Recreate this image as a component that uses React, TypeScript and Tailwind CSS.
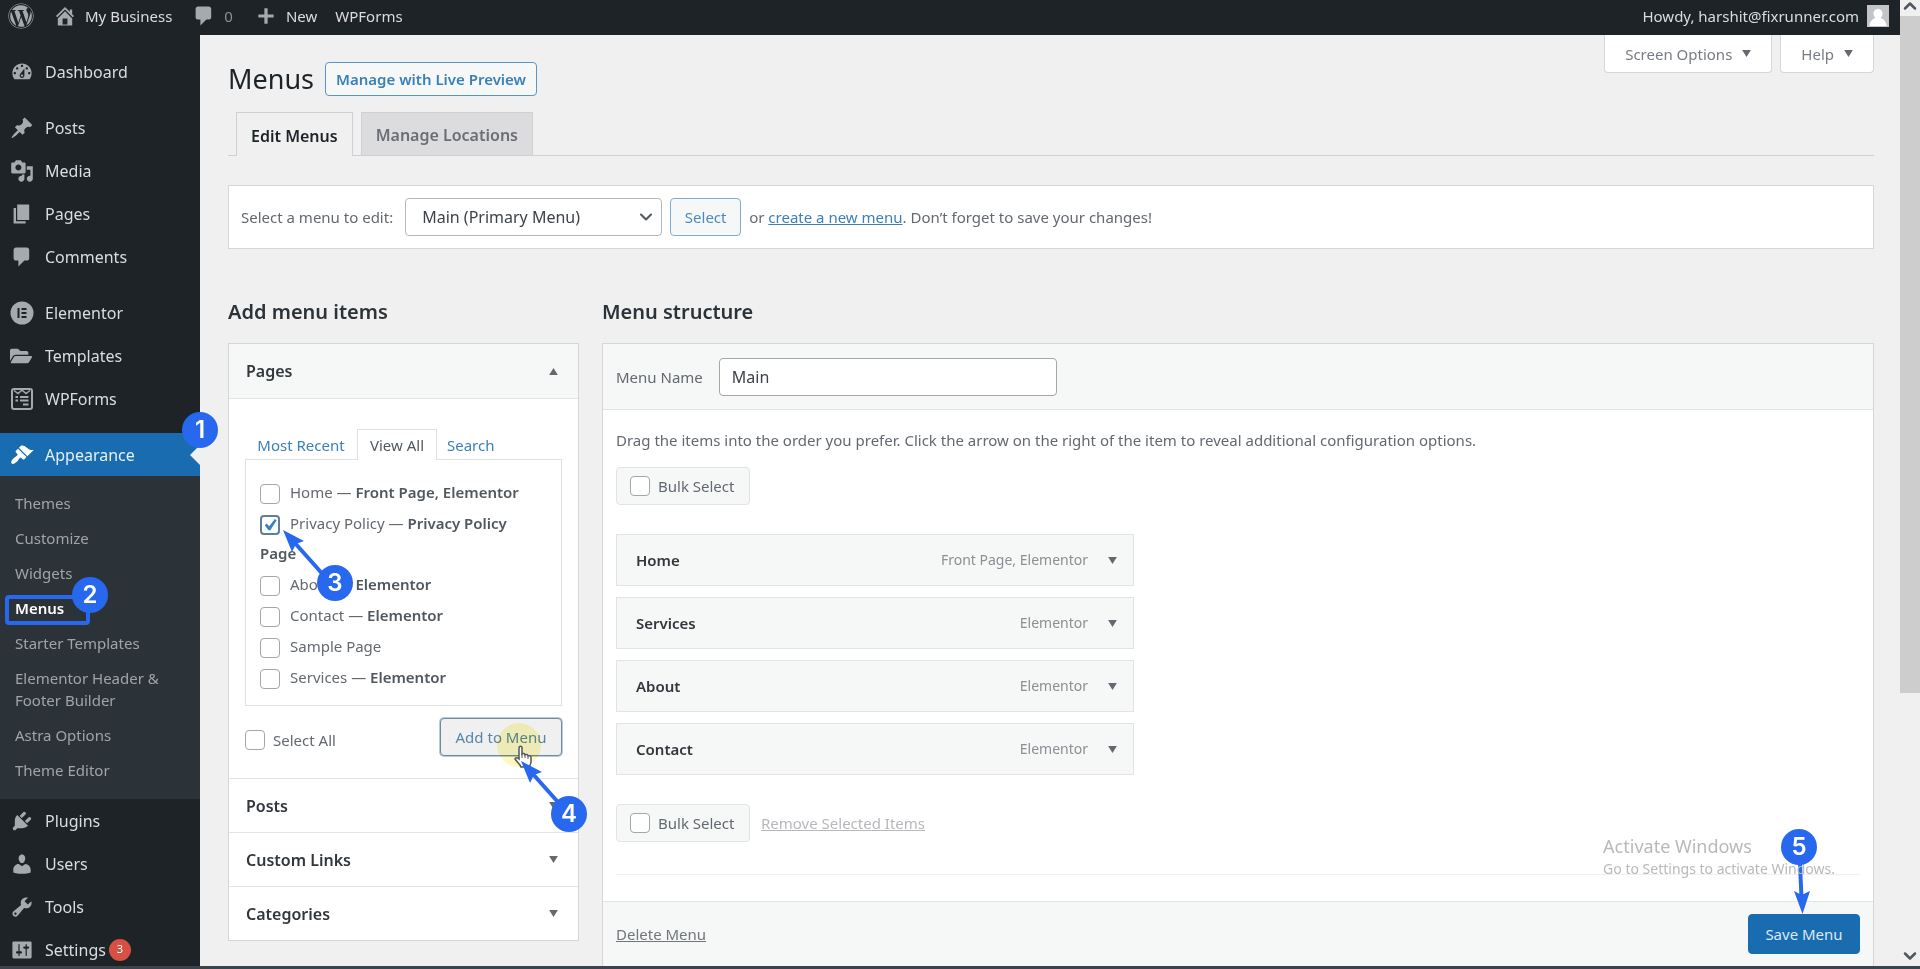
import type { ReactNode } from "react";
import clsx from "clsx";
import { ChevronDown, ChevronUp } from "lucide-react";
import { FaFolderOpen, FaWordpress } from "react-icons/fa";

const iconPaths = {
  dashboard:
    "M3.76 16h12.48c1.1-1.37 1.76-3.11 1.76-5 0-4.42-3.58-8-8-8s-8 3.58-8 8c0 1.89.66 3.63 1.76 5zM10 4c.55 0 1 .45 1 1s-.45 1-1 1-1-.45-1-1 .45-1 1-1zM6 6c.55 0 1 .45 1 1s-.45 1-1 1-1-.45-1-1 .45-1 1-1zm8 0c.55 0 1 .45 1 1s-.45 1-1 1-1-.45-1-1 .45-1 1-1zm-5.37 5.55L12 7v6c0 1.1-.9 2-2 2s-2-.9-2-2c0-.57.24-1.08.63-1.45zM4 10c.55 0 1 .45 1 1s-.45 1-1 1-1-.45-1-1 .45-1 1-1zm12 0c.55 0 1 .45 1 1s-.45 1-1 1-1-.45-1-1 .45-1 1-1zm-5 3c0-.55-.45-1-1-1s-1 .45-1 1 .45 1 1 1 1-.45 1-1z",
  post: "M10.44 3.02l1.82-1.82 6.36 6.35-1.83 1.82c-1.05-.68-2.48-.57-3.41.36l-.75.75c-.92.93-1.04 2.35-.35 3.41l-1.83 1.82-2.41-2.41-2.8 2.79c-.42.42-3.38 2.71-3.8 2.29s1.86-3.39 2.28-3.81l2.79-2.79L4.1 9.36l1.83-1.82c1.05.69 2.48.57 3.4-.36l.75-.75c.93-.92 1.05-2.35.36-3.41z",
  media:
    "M13 11V4c0-.55-.45-1-1-1h-1.67L9 1H5L3.67 3H2c-.55 0-1 .45-1 1v7c0 .55.45 1 1 1h10c.55 0 1-.45 1-1zM7 4.5c1.38 0 2.5 1.12 2.5 2.5S8.38 9.5 7 9.5 4.5 8.38 4.5 7 5.62 4.5 7 4.5zM14 6h5v10.5c0 1.38-1.12 2.5-2.5 2.5S14 17.88 14 16.5s1.12-2.5 2.5-2.5c.17 0 .34.02.5.05V9h-3V6zm-4 8.05V13h2v3.5c0 1.38-1.12 2.5-2.5 2.5S7 17.88 7 16.5 8.12 14 9.5 14c.17 0 .34.02.5.05z",
  page: "M6 15V2h10v13H6zm-1 1h8v2H3V5h2v11z",
  comments: "M5 2h9c1.1 0 2 .9 2 2v7c0 1.1-.9 2-2 2h-2l-5 5v-5H5c-1.1 0-2-.9-2-2V4c0-1.1.9-2 2-2z",
  appearance:
    "M14.48 11.06L7.41 3.99l1.5-1.5c.5-.56 2.3-.47 3.51.32 1.21.8 1.43 1.28 2.91 2.1 1.18.64 2.45 1.26 4.45.85zm-.71.71L6.7 4.7 4.93 6.47c-.39.39-.39 1.02 0 1.41l1.06 1.06c.39.39.39 1.03 0 1.42-.6.6-1.43 1.11-2.21 1.69-.35.26-.7.53-1.01.84C1.43 14.23.4 16.08 1.4 17.07c.99 1 2.84-.03 4.18-1.36.31-.31.58-.66.85-1.02.57-.78 1.08-1.61 1.69-2.21.39-.39 1.02-.39 1.41 0l1.06 1.06c.39.39 1.02.39 1.41 0z",
  plugins:
    "M13.11 4.36L9.87 7.6 8 5.73l3.24-3.24c.35-.34 1.05-.2 1.56.32.52.51.66 1.21.31 1.55zm-8 1.77l.91-1.12 9.01 9.01-1.19.84c-.71.71-2.63 1.16-3.82 1.16H6.14L4.9 17.26c-.59.59-1.54.59-2.12 0-.59-.58-.59-1.53 0-2.12l1.24-1.24v-3.88c0-1.13.4-3.19 1.09-3.89zm7.26 3.97l3.24-3.24c.34-.35 1.04-.21 1.55.31.52.51.66 1.21.31 1.55l-3.24 3.25z",
  users:
    "M10 9.25c-2.27 0-2.73-3.44-2.73-3.44C7 4.02 7.82 2 9.97 2c2.16 0 2.98 2.02 2.71 3.81 0 0-.41 3.44-2.68 3.44zm0 2.57L12.72 10c2.39 0 4.52 2.33 4.52 4.53v2.49s-3.65 1.13-7.24 1.13c-3.65 0-7.24-1.13-7.24-1.13v-2.49c0-2.25 1.94-4.48 4.47-4.48z",
  tools:
    "M16.68 9.77c-1.34 1.34-3.3 1.67-4.95.99l-5.41 6.52c-.99.99-2.59.99-3.58 0s-.99-2.59 0-3.57l6.52-5.42c-.68-1.65-.35-3.61.99-4.95 1.28-1.28 3.12-1.62 4.72-1.06l-2.89 2.89 2.82 2.82 2.86-2.87c.53 1.58.18 3.39-1.08 4.65zM3.81 16.21c.4.39 1.04.39 1.43 0 .4-.4.4-1.04 0-1.43-.39-.4-1.03-.4-1.43 0-.39.39-.39 1.03 0 1.43z",
  settings:
    "M18 16V4c0-.55-.45-1-1-1H3c-.55 0-1 .45-1 1v12c0 .55.45 1 1 1h14c.55 0 1-.45 1-1zM8 11h1c.55 0 1 .45 1 1s-.45 1-1 1H8v1.5c0 .28-.22.5-.5.5s-.5-.22-.5-.5V13H6c-.55 0-1-.45-1-1s.45-1 1-1h1V5.5c0-.28.22-.5.5-.5s.5.22.5.5V11zm5-2h-1c-.55 0-1-.45-1-1s.45-1 1-1h1V5.5c0-.28.22-.5.5-.5s.5.22.5.5V7h1c.55 0 1 .45 1 1s-.45 1-1 1h-1v5.5c0 .28-.22.5-.5.5s-.5-.22-.5-.5V9z",
  home: "M16 8.5l1.53 1.53-1.06 1.06L10 4.6l-6.47 6.49-1.06-1.06L10 2.5l4 4v-2h2v4zm-6-2.46l6 5.99V18H4v-5.97zM12 17v-5H8v5h4z",
  plus: "M18.500 8.200v3.600h-6.700v6.700H8.200v-6.700H1.500V8.200h6.700V1.500h3.600v6.700z",
} as const;

function Icon({ name, className = "size-6" }: { name: keyof typeof iconPaths; className?: string }) {
  return (
    <svg viewBox="0 0 20 20" fill="currentColor" fillRule="evenodd" className={className} aria-hidden="true">
      <path d={iconPaths[name]} />
    </svg>
  );
}

function ElementorIcon() {
  return (
    <svg viewBox="0 0 24 24" className="size-6" aria-hidden="true">
      <circle cx="12" cy="12" r="11.5" fill="currentColor" />
      <path d="M7.5 7h2v10h-2zM11.5 7h5v2h-5zM11.5 11h5v2h-5zM11.5 15h5v2h-5z" fill="#1d2327" />
    </svg>
  );
}

function FormsIcon() {
  return (
    <svg viewBox="0 0 24 24" className="size-6" fill="none" stroke="currentColor" aria-hidden="true">
      <rect x="2" y="2" width="20" height="20" rx="2" strokeWidth="2" />
      <path d="M4 3.5l4 3 3.5-3h1l3.5 3 4-3" strokeWidth="1.5" />
      <path d="M5.5 10H8M10 10h8.500M5.500 13.500H8M10 13.500h8.500M13 17.500h5.500" strokeWidth="2" />
    </svg>
  );
}

function Triangle({ up = false }: { up?: boolean }) {
  return (
    <svg viewBox="0 0 10 8" className="h-[7px] w-[9px] shrink-0" fill="#646970" aria-hidden="true">
      <path d={up ? "M0 8h10L5 0z" : "M0 0h10L5 8z"} />
    </svg>
  );
}

function StepBadge({ step, className }: { step: number; className: string }) {
  return (
    <span
      className={clsx(
        "pointer-events-none absolute z-20 flex size-9 items-center justify-center rounded-full bg-[#2768ee] font-['Inter','Liberation_Sans',sans-serif] text-2xl font-semibold text-white",
        className,
      )}
    >
      {step}
    </span>
  );
}

function DiagonalArrow({ className }: { className: string }) {
  return (
    <svg viewBox="0 0 48 52" className={clsx("pointer-events-none absolute z-10 h-[52px] w-12", className)} aria-hidden="true">
      <path d="M0 0L21 11L13 14L9 22Z" fill="#2768ee" />
      <path d="M11 12L44 49" stroke="#2768ee" strokeWidth="4" />
    </svg>
  );
}

type NavItem = { label: string; icon: ReactNode; active?: boolean; count?: number };

const navGroups: NavItem[][] = [
  [{ label: "Dashboard", icon: <Icon name="dashboard" /> }],
  [
    { label: "Posts", icon: <Icon name="post" /> },
    { label: "Media", icon: <Icon name="media" /> },
    { label: "Pages", icon: <Icon name="page" /> },
    { label: "Comments", icon: <Icon name="comments" /> },
  ],
  [
    { label: "Elementor", icon: <ElementorIcon /> },
    { label: "Templates", icon: <FaFolderOpen className="size-[22px]" /> },
    { label: "WPForms", icon: <FormsIcon /> },
  ],
  [
    { label: "Appearance", icon: <Icon name="appearance" />, active: true },
    { label: "Plugins", icon: <Icon name="plugins" /> },
    { label: "Users", icon: <Icon name="users" /> },
    { label: "Tools", icon: <Icon name="tools" /> },
    { label: "Settings", icon: <Icon name="settings" />, count: 3 },
  ],
];

const appearanceLinks = [
  "Themes",
  "Customize",
  "Widgets",
  "Menus",
  "Starter Templates",
  "Elementor Header & Footer Builder",
  "Astra Options",
  "Theme Editor",
];

type PageOption = { title: string; state?: string; stateRest?: string; checked?: boolean };

const pageOptions: PageOption[] = [
  { title: "Home", state: "Front Page, Elementor" },
  { title: "Privacy Policy", state: "Privacy Policy", stateRest: "Page", checked: true },
  { title: "About", state: "Elementor" },
  { title: "Contact", state: "Elementor" },
  { title: "Sample Page" },
  { title: "Services", state: "Elementor" },
];

const menuItems = [
  { title: "Home", type: "Front Page, Elementor" },
  { title: "Services", type: "Elementor" },
  { title: "About", type: "Elementor" },
  { title: "Contact", type: "Elementor" },
];

const checkboxClasses = "size-5 shrink-0 appearance-none rounded border border-[#a3a6aa] bg-white";

function AdminBar() {
  return (
    <header className="flex h-[35px] shrink-0 items-center bg-[#1d2327] pr-[11px] pb-[3px] pl-2 text-[15px] text-[#dcdcde]">
      <a href="#" aria-label="About WordPress" className="text-[#a7aaad]">
        <FaWordpress className="size-[26px]" />
      </a>
      <a href="#" className="ml-[19px] flex items-center gap-2">
        <Icon name="home" className="size-6 text-[#a7aaad]" />
        My Business
      </a>
      <a href="#" className="ml-5 flex items-center gap-2 text-[#8c8f94]">
        <Icon name="comments" className="size-6 text-[#a7aaad]" />0
      </a>
      <a href="#" className="ml-6 flex items-center gap-[11px]">
        <Icon name="plus" className="size-[18px] text-[#a7aaad]" />
        New
      </a>
      <a href="#" className="ml-[18px]">
        WPForms
      </a>
      <a href="#" className="ml-auto flex items-center gap-2">
        Howdy, harshit@fixrunner.com
        <svg viewBox="0 0 22 22" className="size-[22px]" aria-hidden="true">
          <rect width="22" height="22" fill="#c3c4c7" />
          <path d="M11 4c3 0 4.500 2 4.500 4.500 0 2-1 3.500-2 4.500 3 1 6 3.500 6 8h-17c0-4.500 3-7 6-8-1-1-2-2.500-2-4.500C6.500 6 8 4 11 4z" fill="#fff" />
        </svg>
      </a>
    </header>
  );
}

function Sidebar() {
  return (
    <aside className="z-10 w-[200px] shrink-0 bg-[#1d2327] pt-[15px]">
      <nav className="flex flex-col gap-[13px]">
        {navGroups.map((group, index) => (
          <ul key={index}>
            {group.map((item) => (
              <li key={item.label} className="relative">
                <a
                  href="#"
                  className={clsx(
                    "flex h-[43px] items-center gap-[11px] pl-2.5 text-base",
                    item.active ? "bg-[#1a6cb0] text-[#e4eef6]" : "text-[#dcdcde]",
                  )}
                >
                  <span className={clsx("w-6", item.active ? "text-white" : "text-[#a7aaad]")}>{item.icon}</span>
                  <span>{item.label}</span>
                  {item.count && (
                    <span className="-ml-2 flex size-[22px] items-center justify-center rounded-full bg-[#d65044] text-[11px] text-white">
                      {item.count}
                    </span>
                  )}
                </a>
                {item.active && (
                  <>
                    <svg viewBox="0 0 10 20" className="absolute top-3 right-0 h-5 w-2.5" fill="#f0f0f1" aria-hidden="true">
                      <path d="M10 0v20L0 10z" />
                    </svg>
                    <StepBadge step={1} className="-top-[21px] -right-[18px]" />
                    <AppearanceMenu />
                  </>
                )}
              </li>
            ))}
          </ul>
        ))}
      </nav>
    </aside>
  );
}

function AppearanceMenu() {
  return (
    <ul className="bg-[#2c3338] pt-[9px] pb-3 text-[15px] leading-[22px] text-[#a0a4a8]">
      {appearanceLinks.map((label) => {
        const current = label === "Menus";
        return (
          <li key={label} className="relative">
            <a href="#" className={clsx("block pt-[7px] pr-5 pb-1.5 pl-[15px]", current && "font-semibold text-white")}>
              {label}
            </a>
            {current && (
              <>
                <span className="pointer-events-none absolute top-[5px] left-[5px] h-[30px] w-[85px] rounded border-4 border-[#2768ee]" />
                <StepBadge step={2} className="-top-[13px] left-[72px]" />
              </>
            )}
          </li>
        );
      })}
    </ul>
  );
}

function PageHeader() {
  return (
    <>
      <div className="flex items-start justify-between">
        <div className="flex items-center gap-[11px] pt-[27px]">
          <h1 className="text-[27px] leading-[34px] text-[#1d2327]">Menus</h1>
          <a
            href="#"
            className="flex h-[34px] items-center rounded-sm border border-[#5a96c5] bg-[#f6f7f7] px-2.5 text-[15px] font-semibold text-[#3a80b9]"
          >
            Manage with Live Preview
          </a>
        </div>
        <div className="flex gap-2 text-[15px] text-[#787c82]">
          {["Screen Options", "Help"].map((label) => (
            <button
              key={label}
              type="button"
              className="flex h-[38px] items-center gap-2.5 rounded-b border border-t-0 border-[#d5d6d9] bg-white px-5"
            >
              {label}
              <Triangle />
            </button>
          ))}
        </div>
      </div>

      <nav className="mt-4 flex gap-2 border-b border-[#cfd0d3] pl-2 text-base font-semibold">
        <a
          href="#"
          className="-mb-px flex h-11 items-center border border-b-0 border-[#cfd0d3] bg-[#f0f0f1] px-3.5 pt-0.5 text-[#1d2327]"
        >
          Edit Menus
        </a>
        <a
          href="#"
          className="flex h-[43px] items-center border border-b-0 border-[#cfd0d3] bg-[#dcdcde] px-3.5 pt-0.5 text-[#6a6f75]"
        >
          Manage Locations
        </a>
      </nav>

      <form className="mt-[29px] flex items-center border border-[#d5d6d9] bg-white px-3 py-3">
        <label htmlFor="menu-select">Select a menu to edit:</label>
        <div className="relative ml-3 w-[257px]">
          <select
            id="menu-select"
            className="h-[38px] w-full appearance-none rounded border border-[#b4b6ba] bg-white pl-4 text-base text-[#3c434a]"
          >
            <option>Main (Primary Menu)</option>
          </select>
          <ChevronDown className="pointer-events-none absolute top-[9px] right-1.5 size-5 text-[#50575e]" strokeWidth={2.5} />
        </div>
        <button type="button" className="ml-2 h-[38px] w-[71px] rounded border border-[#7fadd0] bg-[#f6f7f7] text-[#4a8bbf]">
          Select
        </button>
        <p className="ml-2">
          or{" "}
          <a href="#" className="text-[#3a80b9] underline">
            create a new menu
          </a>
          . Don’t forget to save your changes!
        </p>
      </form>
    </>
  );
}

function AddMenuItems() {
  return (
    <section className="w-[351px] shrink-0">
      <h2 className="text-xl leading-7 font-semibold text-[#2c3338]">Add menu items</h2>
      <div className="mt-[17px] border border-[#d5d6d9] bg-white">
        <button
          type="button"
          className="flex h-[55px] w-full items-center justify-between border-b border-[#e3e3e5] bg-[#f6f7f7] pr-5 pl-[17px] text-base font-semibold text-[#32373c]"
        >
          Pages
          <Triangle up />
        </button>

        <div className="px-4 pt-[30px] pb-[22px]">
          <div className="relative z-[1] -mb-px flex text-[15px]">
            <a href="#" className="flex h-[31px] w-28 items-center justify-center text-[#3a80b9]">
              Most Recent
            </a>
            <a
              href="#"
              className="flex h-[31px] w-20 items-center justify-center border border-b-0 border-[#dfe0e2] bg-white text-[#50575e]"
            >
              View All
            </a>
            <a href="#" className="ml-2.5 flex h-[31px] items-center text-[#3a80b9]">
              Search
            </a>
          </div>
          <ul className="flex flex-col gap-px border border-[#dfe0e2] px-[14px] pt-[17px] pb-[13px] leading-[30px]">
            {pageOptions.map((page) => (
              <li key={page.title} className="relative">
                <label className="block">
                  <span className="relative mr-2.5 inline-flex size-5 align-middle">
                    <input
                      type="checkbox"
                      defaultChecked={page.checked}
                      className="peer size-5 appearance-none rounded border border-[#a3a6aa] bg-white checked:border-2 checked:border-[#5d7f9c]"
                    />
                    <svg viewBox="0 0 20 20" className="pointer-events-none absolute inset-0 hidden size-5 peer-checked:block" aria-hidden="true">
                      <path d="M14.830 3.890l1.840 1.440-6.310 9.880H8.520L4.780 10.170l1.840-1.750 2.570 2.900z" fill="#3582c4" />
                    </svg>
                  </span>
                  {page.title}
                  {page.state && (
                    <>
                      {" — "}
                      <strong className="font-semibold text-[#50575e]">
                        {page.state}
                        {page.stateRest && (
                          <>
                            <br />
                            {page.stateRest}
                          </>
                        )}
                      </strong>
                    </>
                  )}
                </label>
                {page.checked && (
                  <>
                    <DiagonalArrow className="top-[22px] left-[23px]" />
                    <StepBadge step={3} className="top-[57px] left-[57px]" />
                  </>
                )}
              </li>
            ))}
          </ul>

          <div className="mt-3 flex items-center justify-between">
            <label className="flex items-center gap-2 pt-1.5">
              <input type="checkbox" className={checkboxClasses} />
              Select All
            </label>
            <div className="relative">
              <button
                type="button"
                className="h-[38px] w-[122px] rounded border border-[#6f8ba3] bg-[#f0f0f1] text-[#5585ad] shadow-[0_0_0_1px_#b9cad8]"
              >
                Add to Menu
              </button>
              <span className="pointer-events-none absolute top-[5px] left-[57px] size-11 rounded-full bg-[#fdf9c0] mix-blend-multiply" />
              <svg viewBox="0 0 20 24" className="pointer-events-none absolute top-[27px] left-[73px] h-6 w-5" aria-hidden="true">
                <path
                  d="M6 14V3c0-2.500 3-2.500 3 0v6c1-1 3-.5 3 .800 1-.800 2.800-.3 3 1 1.500-.500 3 .2 3 1.700V17c0 2-1.500 3-1.500 5H8c-1-3-4-5-6-8 .5-2 2.500-1.500 4 0z"
                  fill="#fff"
                  stroke="#50575e"
                  strokeWidth="1.500"
                />
                <path d="M9 9v4M12 10v3M15 11v3" stroke="#50575e" />
              </svg>
              <DiagonalArrow className="top-[43px] left-[81px]" />
              <StepBadge step={4} className="top-[78px] left-[111px]" />
            </div>
          </div>
        </div>

        {["Posts", "Custom Links", "Categories"].map((label) => (
          <button
            key={label}
            type="button"
            className="flex h-[54px] w-full items-center justify-between border-t border-[#e3e3e5] pr-5 pl-[17px] text-base font-semibold text-[#32373c]"
          >
            {label}
            <Triangle />
          </button>
        ))}
      </div>
    </section>
  );
}

function BulkSelect() {
  return (
    <label className="flex h-[38px] w-[134px] items-center gap-2 rounded-sm border border-[#e3e3e5] bg-[#f6f7f7] pl-[13px]">
      <input type="checkbox" className={checkboxClasses} />
      Bulk Select
    </label>
  );
}

function MenuStructure() {
  return (
    <section className="flex min-w-0 flex-1 flex-col">
      <h2 className="text-xl leading-7 font-semibold text-[#2c3338]">Menu structure</h2>
      <div className="mt-[17px] flex flex-1 flex-col border border-b-0 border-[#d5d6d9] bg-white">
        <div className="flex h-[66px] items-center gap-4 border-b border-[#e3e3e5] bg-[#f6f7f7] pl-[13px]">
          <label htmlFor="menu-name">Menu Name</label>
          <input
            id="menu-name"
            type="text"
            defaultValue="Main"
            className="h-[38px] w-[338px] rounded border border-[#a3a6aa] bg-white px-3 text-base text-[#3c434a]"
          />
        </div>

        <div className="px-[13px] pt-[19px]">
          <p>
            Drag the items into the order you prefer. Click the arrow on the right of the item to reveal additional
            configuration options.
          </p>
          <div className="mt-4">
            <BulkSelect />
          </div>
          <ul className="mt-[29px] flex w-[518px] max-w-full flex-col gap-[11px]">
            {menuItems.map((item) => (
              <li key={item.title} className="flex h-[52px] items-center border border-[#e3e3e5] bg-[#f6f7f7] pr-4 pl-[19px]">
                <span className="font-semibold text-[#32373c]">{item.title}</span>
                <span className="mr-5 ml-auto text-sm text-[#8c8f94]">{item.type}</span>
                <button type="button" aria-label={`Edit ${item.title}`}>
                  <Triangle />
                </button>
              </li>
            ))}
          </ul>
          <div className="mt-[29px] flex items-center gap-[11px]">
            <BulkSelect />
            <a href="#" className="text-[#b6b8bb] underline">
              Remove Selected Items
            </a>
          </div>
          <hr className="mt-8 border-[#f0f0f1]" />
        </div>

        <div className="mt-auto flex h-[65px] items-center justify-between border-t border-[#e3e3e5] bg-[#f6f7f7] px-[13px]">
          <a href="#" className="text-[#72767b] underline">
            Delete Menu
          </a>
          <div className="relative">
            <button type="button" className="h-10 w-28 rounded border border-[#1a6cb0] bg-[#1a6cb0] text-[#dbe9f4]">
              Save Menu
            </button>
            <svg viewBox="0 0 16 50" className="pointer-events-none absolute -top-[50px] left-[46px] h-[50px] w-4" aria-hidden="true">
              <path d="M8.500 50L0 27L7.500 31L16 27Z" fill="#2768ee" />
              <path d="M6 0L7.500 34" stroke="#2768ee" strokeWidth="4" />
            </svg>
            <StepBadge step={5} className="-top-[85px] left-[33px]" />
          </div>
        </div>
      </div>
    </section>
  );
}

export default function App() {
  return (
    <div className="flex h-screen flex-col overflow-hidden bg-[#f0f0f1] font-['Noto_Sans','Open_Sans',sans-serif] text-[15px] leading-[22px] text-[#646970]">
      <div className="flex min-h-0 flex-1 overflow-hidden">
        <div className="flex min-w-0 flex-1 flex-col">
          <AdminBar />
          <div className="flex min-h-0 flex-1">
            <Sidebar />
            <main className="relative flex min-w-0 flex-1 flex-col pr-[26px] pl-7">
              <PageHeader />
              <div className="mt-[49px] flex flex-1 gap-[23px]">
                <AddMenuItems />
                <MenuStructure />
              </div>
              <div className="pointer-events-none absolute right-[65px] bottom-[86px] text-[#b9b9b9]">
                <p className="text-lg leading-6">Activate Windows</p>
                <p className="text-sm leading-[22px]">Go to Settings to activate Windows.</p>
              </div>
            </main>
          </div>
        </div>

        <div className="flex w-5 shrink-0 flex-col items-center bg-[#f0f0f1] text-[#50575e]" aria-hidden="true">
          <ChevronUp className="-mt-1 size-5" strokeWidth={3} />
          <div className="h-[677px] w-full bg-[#cdcdcd]" />
          <ChevronDown className="mt-auto size-5" strokeWidth={3} />
        </div>
      </div>
      <div className="h-[3px] shrink-0 bg-[#3c434a]" />
    </div>
  );
}
